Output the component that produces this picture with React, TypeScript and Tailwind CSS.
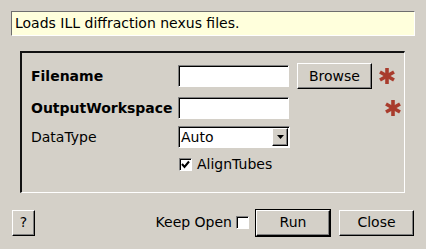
import * as React from 'react';

const sunken =
  'border border-t-[#808080] border-l-[#808080] border-b-white border-r-white shadow-[inset_1px_1px_0_#000]';
const raised =
  'border border-t-white border-l-white border-b-black border-r-black shadow-[inset_-1px_-1px_0_#808080] bg-[#d4d0c8]';

function Star() {
  return (
    <svg width="18" height="18" viewBox="0 0 18 18" className="ml-[6px]">
      <g stroke="#a93c2d" strokeWidth="3.6" strokeLinecap="butt">
        <line x1="9" y1="1" x2="9" y2="17" />
        <line x1="2" y1="5" x2="16" y2="13" />
        <line x1="2" y1="13" x2="16" y2="5" />
      </g>
    </svg>
  );
}

function Check({ checked }: { checked?: boolean }) {
  return (
    <div className={`w-[13px] h-[13px] bg-white ${sunken} flex items-center justify-center`}>
      {checked && (
        <svg width="9" height="9" viewBox="0 0 9 9">
          <path d="M1 4 L3.5 7 L8 1.5" stroke="#000" strokeWidth="2" fill="none" />
        </svg>
      )}
    </div>
  );
}

export default function App() {
  return (
    <div
      className="w-[426px] h-[249px] bg-[#d4d0c8] text-black text-[14px] p-[11px] flex flex-col"
      style={{ fontFamily: '"DejaVu Sans", sans-serif' }}
    >
      <div className="h-[25px] w-[404px] bg-[#ffffdc] border border-t-[#6e6e6e] border-l-[#6e6e6e] border-b-white border-r-white flex items-center pl-[3px]">
        Loads ILL diffraction nexus files.
      </div>

      <div className="mt-[15px] ml-[9px] w-[385px] h-[142px] border-t-2 border-l-2 border-t-[#111] border-l-[#111] border-b border-r border-b-white border-r-white flex flex-col pl-[9px]">
        <div className="mt-[10px] h-[26px] flex items-center">
          <span className="w-[147px] font-bold">Filename</span>
          <div className={`w-[111px] h-[22px] bg-white ${sunken}`} />
          <button className={`ml-[8px] w-[75px] h-[26px] ${raised}`}>Browse</button>
          <Star />
        </div>
        <div className="mt-[8px] h-[22px] flex items-center">
          <span className="w-[147px] font-bold">OutputWorkspace</span>
          <div className={`w-[111px] h-[22px] bg-white ${sunken}`} />
          <div className="w-[89px]" />
          <Star />
        </div>
        <div className="mt-[7px] h-[22px] flex items-center">
          <span className="w-[147px]">DataType</span>
          <div className={`w-[112px] h-[22px] bg-white ${sunken} flex items-center justify-between`}>
            <span className="pl-[2px]">Auto</span>
            <div className={`w-[16px] h-[18px] mr-px ${raised} flex items-center justify-center`}>
              <svg width="7" height="4" viewBox="0 0 7 4">
                <path d="M0 0 H7 L3.5 4 Z" fill="#000" />
              </svg>
            </div>
          </div>
        </div>
        <div className="mt-[10px] h-[13px] flex items-center pl-[148px]">
          <Check checked />
          <span className="ml-[5px]">AlignTubes</span>
        </div>
      </div>

      <div className="mt-[16px] h-[27px] flex items-center">
        <button className={`ml-px w-[23px] h-[26px] ${raised}`}>?</button>
        <div className="flex-1" />
        <span>Keep Open</span>
        <div className="ml-[4px]">
          <Check />
        </div>
        <div className="ml-[6px] border border-black">
          <button className={`w-[74px] h-[26px] ${raised}`}>Run</button>
        </div>
        <button className={`ml-[8px] w-[75px] h-[26px] ${raised}`}>Close</button>
        <div className="w-px" />
      </div>
    </div>
  );
}
